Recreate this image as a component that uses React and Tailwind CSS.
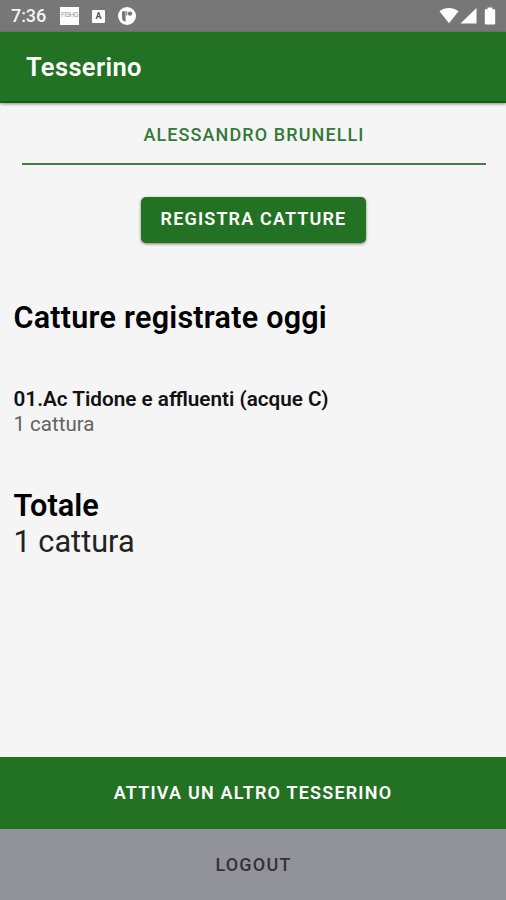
import React, { useState } from "react";

const catches = [
    { id: 1, place: "01.Ac Tidone e affluenti (acque C)", count: 1 },
];

const countLabel = (n) => `${n} ${n === 1 ? "cattura" : "catture"}`;

const StatusBar = () => {
    return (
        <div className="flex h-8 shrink-0 items-center bg-[#777777] text-white">
            <span className="ml-[11px] w-[49px] text-[18px] leading-8 font-medium tracking-[-0.1px] text-[#f4f4f4]">7:36</span>
            <div className="flex h-[18px] w-[19px] items-start justify-center overflow-hidden bg-white pt-[5px] text-[7px] leading-none tracking-[-0.5px] text-[#999999]">FISHG</div>
            <div className="ml-[13px] flex h-[13px] w-[13px] items-center justify-center rounded-[1px] bg-white text-[9px] leading-none font-bold text-[#555555]">A</div>
            <svg className="ml-[13px]" width="18" height="18" viewBox="0 0 18 18">
                <circle cx="9" cy="9" r="9" fill="#fff" />
                <path d="M4 4.200h3.600v10.600C5.200 14.100 4 12.700 4 10.900z" fill="#777777" />
                <path d="M8.200 4.200h1v4.400h-1z" fill="#777777" />
                <circle cx="12" cy="6.600" r="2.200" fill="#777777" />
            </svg>
            <svg className="ml-auto mr-2" width="60" height="20" viewBox="0 0 60 20" fill="#fff">
                <path d="M1.500 5.200C7.500.900 14.500.900 20.500 5.200L11 17.300z" />
                <path d="M38.500 2v15.500H22.500z" />
                <path d="M49.500 1.500h5v1.800h1.500a1.200 1.200 0 0 1 1.200 1.200v12.800a1.200 1.200 0 0 1-1.200 1.200h-8a1.200 1.200 0 0 1-1.200-1.200V4.500a1.200 1.200 0 0 1 1.200-1.200h1.500z" />
            </svg>
        </div>
    );
};

const App = () => {
    const [items] = useState(catches);
    const total = items.reduce((sum, item) => sum + item.count, 0);

    return (
        <div className="flex h-screen w-full flex-col overflow-hidden bg-[#f5f5f5] font-['Roboto',sans-serif] text-black">
            <StatusBar />
            <header className="z-10 flex h-[71px] shrink-0 items-center border-b-2 border-[#0b6610] bg-[#237223] px-[26px] pt-[2px] shadow-[0_1px_3px_rgba(0,0,0,0.45)]">
                <h1 className="text-[25.5px] font-semibold tracking-[0.35px] text-white">Tesserino</h1>
            </header>

            <main className="flex flex-1 flex-col">
                <div className="mr-5 ml-[22px] flex h-[62px] shrink-0 items-center justify-center border-b-2 border-[#417f45] pt-[2px] text-[18px] font-medium tracking-[1.1px] text-[#347939]">
                    ALESSANDRO BRUNELLI
                </div>
                <button className="mt-8 ml-px h-[46px] w-[225px] self-center rounded-[5px] bg-[#237223] pb-[3px] text-[18px] font-semibold tracking-[1.15px] text-white shadow-[0_1px_3px_rgba(0,0,0,0.5)]">
                    REGISTRA CATTURE
                </button>

                <h2 className="mt-[55px] px-[13.5px] text-[30.5px] leading-10 font-semibold tracking-[0.25px]">Catture registrate oggi</h2>
                <ul className="mt-[49px] px-[13.5px]">
                    {items.map((item) => (
                        <li key={item.id}>
                            <p className="text-[20.7px] leading-[25px] font-semibold text-[#111111]">{item.place}</p>
                            <p className="text-[20.5px] leading-[25px] text-[#626262]">{countLabel(item.count)}</p>
                        </li>
                    ))}
                </ul>

                <div className="mt-[51px] px-[13.5px] text-[30.7px] leading-9">
                    <p className="font-semibold">Totale</p>
                    <p className="text-[#222222]">{countLabel(total)}</p>
                </div>
            </main>

            <button className="h-[72px] shrink-0 bg-[#237223] pb-px text-[18px] font-semibold tracking-[1.2px] text-white">
                ATTIVA UN ALTRO TESSERINO
            </button>
            <button className="h-[71px] shrink-0 bg-[#92929b] pl-px text-[18px] font-medium tracking-[1.2px] text-[#31313a]">
                LOGOUT
            </button>
        </div>
    );
};

export default App;
